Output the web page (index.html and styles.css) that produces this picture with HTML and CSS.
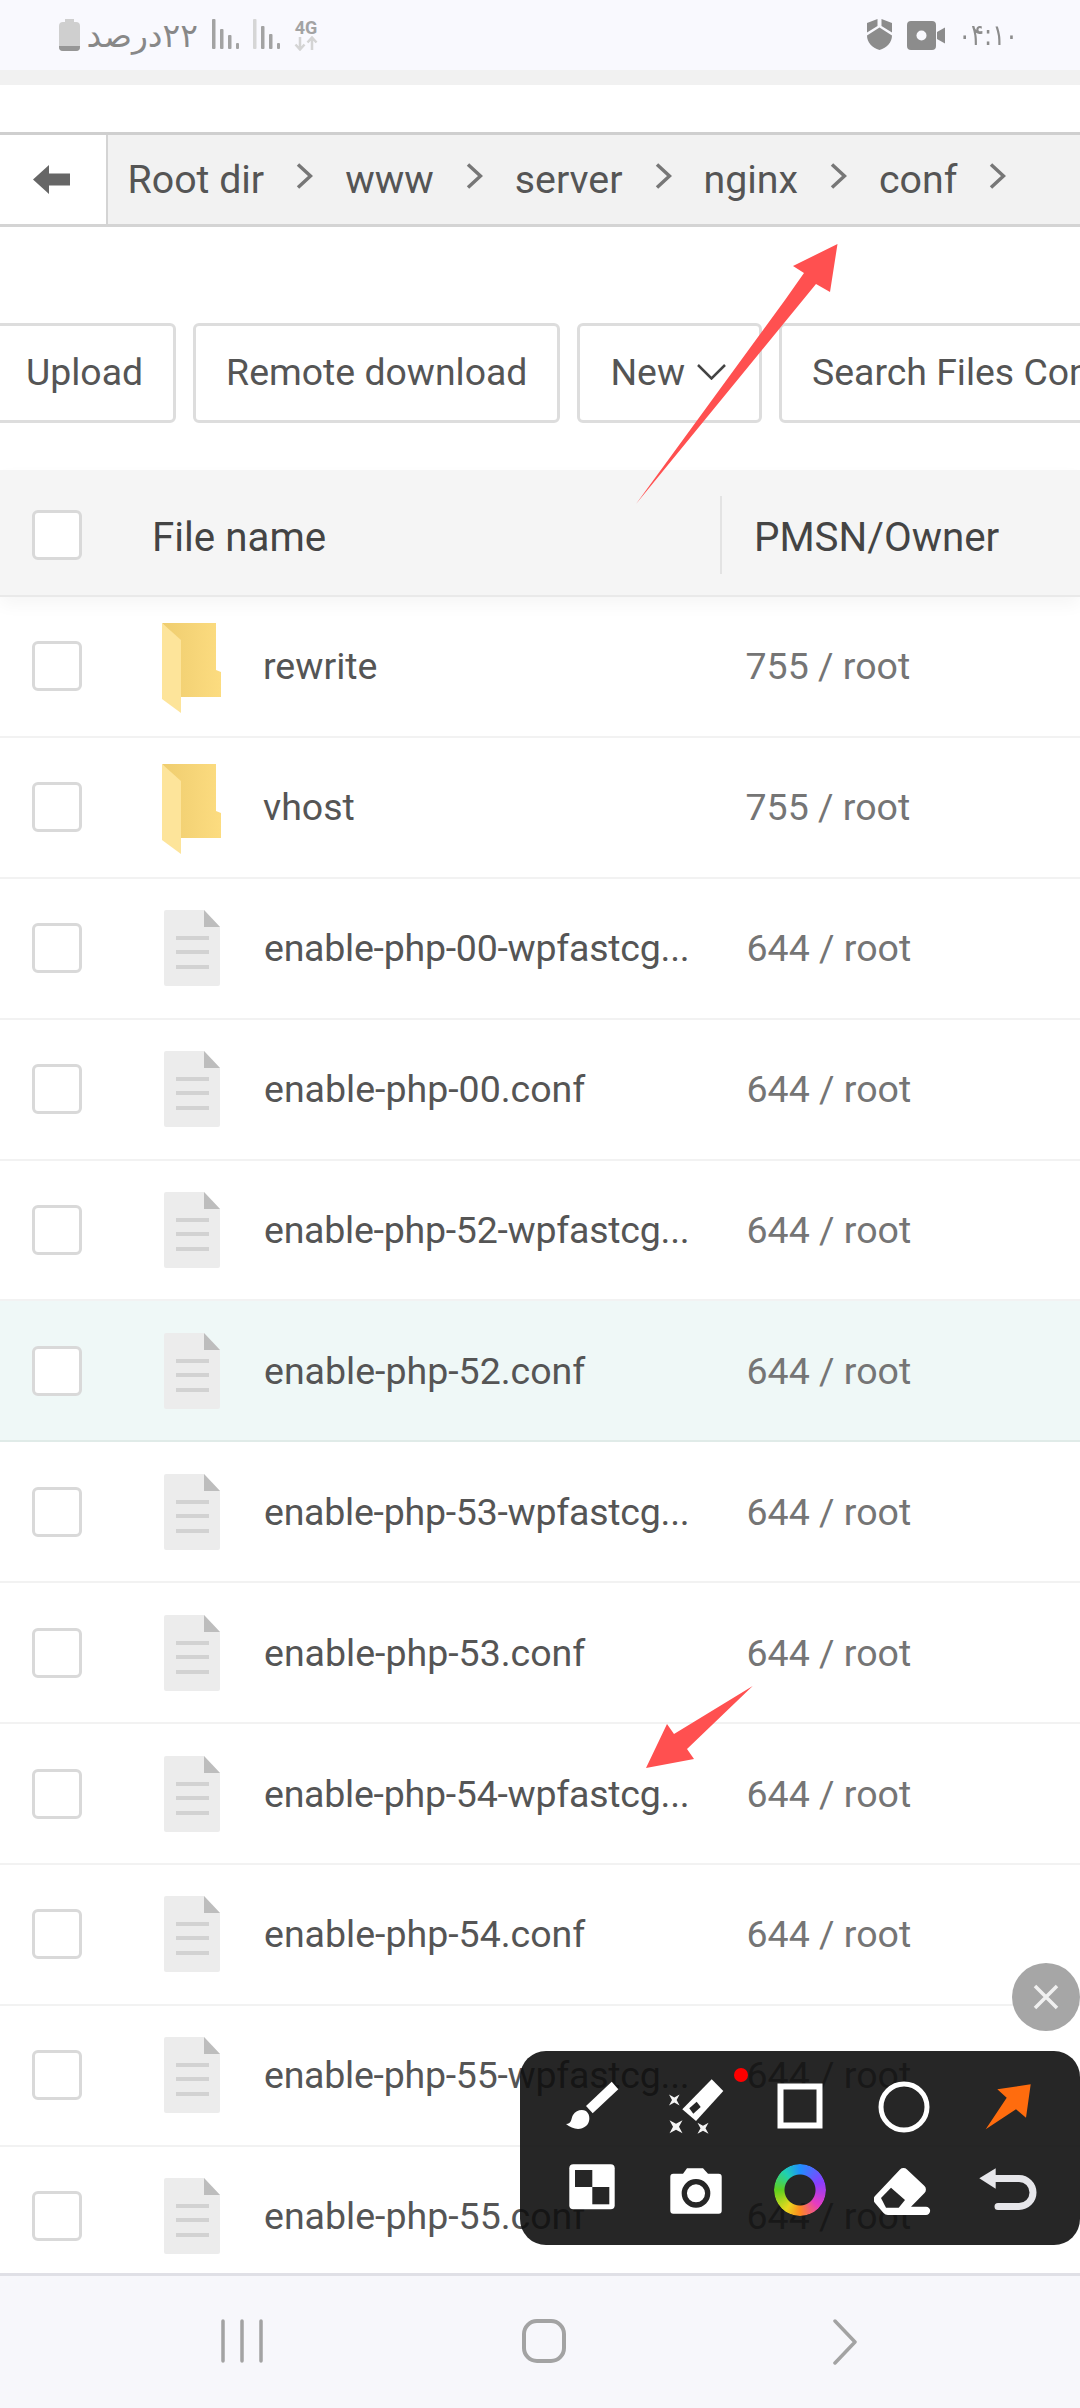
FILE: index.html
```html
<!DOCTYPE html>
<html lang="en">
<head>
    <meta charset="UTF-8">
    <meta name="viewport" content="width=device-width, initial-scale=1.0">
    <title>File manager</title>
    <link rel="stylesheet" href="styles.css">
</head>
<body>
    <div class="phone">
        <div class="status-bar">
            <div class="status-left">
                <svg class="battery" width="21" height="32" viewBox="0 0 21 32"><path d="M6 0h9v3h2a4 4 0 0 1 4 4v21a4 4 0 0 1-4 4H4a4 4 0 0 1-4-4V7a4 4 0 0 1 4-4h2z" fill="#cfcfcf"/><path d="M0 27h21v1a4 4 0 0 1-4 4H4a4 4 0 0 1-4-4z" fill="#969696"/></svg>
                <span class="status-text" dir="rtl">۲۲درصد</span>
                <svg class="signal" width="27" height="30" viewBox="0 0 27 30"><g fill="#a3a3a3"><rect x="0" y="0" width="3.500" height="30" rx="1"/><rect x="8" y="10" width="3.500" height="20" rx="1"/><rect x="16" y="16" width="3.500" height="14" rx="1"/><rect x="24" y="24" width="3" height="6" rx="1"/></g></svg>
                <svg class="signal" width="27" height="30" viewBox="0 0 27 30"><rect x="0" y="0" width="3.500" height="30" rx="1" fill="#d6d6d6"/><g fill="#a3a3a3"><rect x="8" y="7" width="3.500" height="23" rx="1"/><rect x="16" y="15" width="3.500" height="15" rx="1"/><rect x="24" y="24" width="3" height="6" rx="1"/></g></svg>
                <div class="net">
                    <span class="net-label">4G</span>
                    <svg width="24" height="15" viewBox="0 0 24 15"><path d="M6 1v12M1.500 8.500 6 13.500l4.500-5" fill="none" stroke="#d4d4d4" stroke-width="2.500"/><path d="M18 14V2M13.500 6.500 18 1.500l4.500 5" fill="none" stroke="#d4d4d4" stroke-width="2.500"/></svg>
                </div>
            </div>
            <div class="status-right">
                <svg class="st-shield" width="25" height="31" viewBox="0 0 25 31"><path d="M0 4 10.500 0v7L0 13.500zM25 4 14.500 0v7L25 13.500zM0 16.500l12.500-8 12.500 8c0 7-5 12-12.500 14.500C5 28.500 0 23.500 0 16.500z" fill="#8c8c8c"/></svg>
                <svg class="st-cam" width="38" height="29" viewBox="0 0 38 29"><path d="M4 0h21a4 4 0 0 1 4 4v21a4 4 0 0 1-4 4H4a4 4 0 0 1-4-4V4a4 4 0 0 1 4-4zM30 11l8-4.500v16L30 18z" fill="#8c8c8c"/><circle cx="14.500" cy="14.500" r="5" fill="#f9f9fe"/></svg>
                <span class="status-time">۰۴:۱۰</span>
            </div>
        </div>

        <div class="page">
            <div class="path-bar">
                <div class="path-back">
                    <svg width="37" height="29" viewBox="0 0 37 29"><path d="M0 14.500 16 0v8.500h21v12H16V29z" fill="#666"/></svg>
                </div>
                <div class="path-crumbs">
                    <span class="crumb">Root dir</span>
                    <svg class="crumb-sep" width="17" height="26" viewBox="0 0 17 26"><path d="M2 1.500 14.500 13 2 24.500" fill="none" stroke="#777" stroke-width="3.500"/></svg>
                    <span class="crumb">www</span>
                    <svg class="crumb-sep" width="17" height="26" viewBox="0 0 17 26"><path d="M2 1.500 14.500 13 2 24.500" fill="none" stroke="#777" stroke-width="3.500"/></svg>
                    <span class="crumb">server</span>
                    <svg class="crumb-sep" width="17" height="26" viewBox="0 0 17 26"><path d="M2 1.500 14.500 13 2 24.500" fill="none" stroke="#777" stroke-width="3.500"/></svg>
                    <span class="crumb">nginx</span>
                    <svg class="crumb-sep" width="17" height="26" viewBox="0 0 17 26"><path d="M2 1.500 14.500 13 2 24.500" fill="none" stroke="#777" stroke-width="3.500"/></svg>
                    <span class="crumb">conf</span>
                    <svg class="crumb-sep" width="17" height="26" viewBox="0 0 17 26"><path d="M2 1.500 14.500 13 2 24.500" fill="none" stroke="#777" stroke-width="3.500"/></svg>
                </div>
            </div>

            <div class="toolbar">
                <button class="tool-btn">Upload</button>
                <button class="tool-btn">Remote download</button>
                <button class="tool-btn btn-new">New
                    <svg width="29" height="16" viewBox="0 0 29 16"><path d="M1 1l13.500 13.500L28 1" fill="none" stroke="#444" stroke-width="2.500"/></svg>
                </button>
                <button class="tool-btn">Search Files Content</button>
            </div>

            <div class="table-head">
                <div class="cell-check"><span class="check"></span></div>
                <div class="head-name">File name</div>
                <div class="head-owner">PMSN/Owner</div>
            </div>

            <div class="rows">
                <div class="row">
                    <div class="cell-check"><span class="check"></span></div>
                    <svg class="icon-folder" width="60" height="90" viewBox="0 0 60 90"><use href="#folder"/></svg>
                    <div class="name">rewrite</div><div class="owner">755 / root</div>
                </div>
                <div class="row">
                    <div class="cell-check"><span class="check"></span></div>
                    <svg class="icon-folder" width="60" height="90" viewBox="0 0 60 90"><use href="#folder"/></svg>
                    <div class="name">vhost</div><div class="owner">755 / root</div>
                </div>
                <div class="row">
                    <div class="cell-check"><span class="check"></span></div>
                    <svg class="icon-file" width="56" height="76" viewBox="0 0 56 76"><use href="#file"/></svg>
                    <div class="name name-long">enable-php-00-wpfastcg...</div><div class="owner">644 / root</div>
                </div>
                <div class="row">
                    <div class="cell-check"><span class="check"></span></div>
                    <svg class="icon-file" width="56" height="76" viewBox="0 0 56 76"><use href="#file"/></svg>
                    <div class="name">enable-php-00.conf</div><div class="owner">644 / root</div>
                </div>
                <div class="row">
                    <div class="cell-check"><span class="check"></span></div>
                    <svg class="icon-file" width="56" height="76" viewBox="0 0 56 76"><use href="#file"/></svg>
                    <div class="name name-long">enable-php-52-wpfastcg...</div><div class="owner">644 / root</div>
                </div>
                <div class="row row-active">
                    <div class="cell-check"><span class="check"></span></div>
                    <svg class="icon-file" width="56" height="76" viewBox="0 0 56 76"><use href="#file"/></svg>
                    <div class="name">enable-php-52.conf</div><div class="owner">644 / root</div>
                </div>
                <div class="row">
                    <div class="cell-check"><span class="check"></span></div>
                    <svg class="icon-file" width="56" height="76" viewBox="0 0 56 76"><use href="#file"/></svg>
                    <div class="name name-long">enable-php-53-wpfastcg...</div><div class="owner">644 / root</div>
                </div>
                <div class="row">
                    <div class="cell-check"><span class="check"></span></div>
                    <svg class="icon-file" width="56" height="76" viewBox="0 0 56 76"><use href="#file"/></svg>
                    <div class="name">enable-php-53.conf</div><div class="owner">644 / root</div>
                </div>
                <div class="row">
                    <div class="cell-check"><span class="check"></span></div>
                    <svg class="icon-file" width="56" height="76" viewBox="0 0 56 76"><use href="#file"/></svg>
                    <div class="name name-long">enable-php-54-wpfastcg...</div><div class="owner">644 / root</div>
                </div>
                <div class="row">
                    <div class="cell-check"><span class="check"></span></div>
                    <svg class="icon-file" width="56" height="76" viewBox="0 0 56 76"><use href="#file"/></svg>
                    <div class="name">enable-php-54.conf</div><div class="owner">644 / root</div>
                </div>
                <div class="row">
                    <div class="cell-check"><span class="check"></span></div>
                    <svg class="icon-file" width="56" height="76" viewBox="0 0 56 76"><use href="#file"/></svg>
                    <div class="name name-long">enable-php-55-wpfastcg...</div><div class="owner">644 / root</div>
                </div>
                <div class="row">
                    <div class="cell-check"><span class="check"></span></div>
                    <svg class="icon-file" width="56" height="76" viewBox="0 0 56 76"><use href="#file"/></svg>
                    <div class="name">enable-php-55.conf</div><div class="owner">644 / root</div>
                </div>
            </div>
        </div>

        <div class="nav-bar">
            <svg width="44" height="44" viewBox="0 0 44 44"><path d="M3 2v40M22 2v40M41 2v40" fill="none" stroke="#a3a3a3" stroke-width="3.500" stroke-linecap="round"/></svg>
            <svg width="44" height="44" viewBox="0 0 44 44"><rect x="2" y="2" width="40" height="40" rx="13" fill="none" stroke="#a3a3a3" stroke-width="4"/></svg>
            <svg class="nav-back" width="24" height="46" viewBox="0 0 24 46"><path d="M2 2l20 21L2 44" fill="none" stroke="#a3a3a3" stroke-width="3.500" stroke-linecap="round" stroke-linejoin="round"/></svg>
        </div>

        <!-- annotations drawn over the screenshot -->
        <svg class="marks" width="1080" height="2408" viewBox="0 0 1080 2408">
            <path d="M837.500 244 830 292 816 284 636 504 785 300 804 273 793 266z" fill="#ff5050"/>
            <path d="M752.700 1686 674 1734 667 1724 646 1768 694 1759 687 1749z" fill="#ff5050"/>
        </svg>

        <button class="close-btn">
            <svg width="26" height="26" viewBox="0 0 26 26"><path d="M2 2l22 22M24 2 2 24" fill="none" stroke="#f0f0f0" stroke-width="3.500"/></svg>
        </button>

        <div class="draw-panel">
            <span class="red-dot"></span>
            <svg class="tool" width="60" height="60" viewBox="0 0 60 60"><path d="M49.700 4.700 56.300 12.300 30.700 36.300 24 29z" fill="#fff"/><path d="M4 47C10 47 9 41 11 38 14 33 20 32 24 34 29 38 28 46 24 49 18 54 10 52 4 47z" fill="#fff"/></svg>
            <svg class="tool" width="60" height="60" viewBox="0 0 60 60"><path d="M45.700 2.300 57.300 14 30 44 16.300 32.300z" fill="#fff"/><path d="M34.700 30 27.300 36.700 23.300 31.300 30.700 24.700z" fill="#262626"/><path d="M3 17.500 8.300 20.500 13.600 17.500 10.600 23 13.600 28.500 8.300 25.500 3 28.500 6 23zM3.500 43.200 10 46.700 16.500 43.200 13 49.700 16.500 56.200 10 52.700 3.500 56.200 7 49.700zM31.500 45.800 37 48.800 42.500 45.800 39.500 51.300 42.500 56.800 37 53.800 31.500 56.800 34.500 51.300z" fill="#f4f4f4"/></svg>
            <svg class="tool" width="60" height="60" viewBox="0 0 60 60"><rect x="10.500" y="9.500" width="39" height="39" fill="none" stroke="#fff" stroke-width="6"/></svg>
            <svg class="tool" width="60" height="60" viewBox="0 0 60 60"><circle cx="30" cy="30" r="23" fill="none" stroke="#fff" stroke-width="5"/></svg>
            <svg class="tool" width="60" height="60" viewBox="0 0 60 60"><path d="M52.700 7.300 48 40.700 38 32.300 7.700 52.300 28.700 20.700 19.300 12.300z" fill="#ff6c0e"/></svg>
            <svg class="tool" width="60" height="60" viewBox="0 0 60 60"><rect x="7.300" y="4.300" width="45.400" height="45" rx="4" fill="#fff"/><rect x="13" y="10" width="17.300" height="17" fill="#262626"/><rect x="30.300" y="27" width="17" height="17.300" fill="#262626"/></svg>
            <svg class="tool" width="60" height="60" viewBox="0 0 60 60"><path d="M4.300 16.700a3 3 0 0 1 3-3H17L21 8.300H37L42 13.700H52.700a3 3 0 0 1 3 3V50.700a3 3 0 0 1-3 3H7.300a3 3 0 0 1-3-3z" fill="#fff"/><circle cx="30" cy="33.300" r="11.700" fill="none" stroke="#262626" stroke-width="5.300"/></svg>
            <div class="tool color-ring"></div>
            <svg class="tool" width="60" height="60" viewBox="0 0 60 60"><path d="M26 9.500a5 5 0 0 1 7 0L50.500 26a5 5 0 0 1 0 7L37 46.700H52a4 4 0 0 1 0 8.300H14a6 6 0 0 1-4.500-2L1 43a5 5 0 0 1 0-7z" fill="#fff"/><path d="M17 27.700 31 40 24.700 47.700H12L7 38z" fill="#262626"/></svg>
            <svg class="tool" width="60" height="60" viewBox="0 0 60 60"><path d="M1.300 18.300 17.700 8.300V28.700z" fill="#e6e6ea"/><path d="M16 18.500H41a14 14 0 0 1 0 28H20" fill="none" stroke="#e6e6ea" stroke-width="7" stroke-linecap="round"/></svg>
        </div>

        <svg class="defs" width="0" height="0">
            <defs>
                <linearGradient id="folderBack" x1="0" x2="1" y1="0" y2="0"><stop offset="0" stop-color="#efcd6f"/><stop offset="1" stop-color="#fcdc80"/></linearGradient>
                <g id="folder">
                    <path d="M0 0h54v47l5 2v25H19V24z" fill="url(#folderBack)"/>
                    <path d="M0 0 19 17v73L0 76z" fill="#fde49a"/>
                </g>
                <g id="file">
                    <path d="M0 2a2 2 0 0 1 2-2h38l16 17v57a2 2 0 0 1-2 2H2a2 2 0 0 1-2-2z" fill="#ececec"/>
                    <path d="M40 0 56 17H40z" fill="#bdbdbd"/>
                    <path d="M12 26h33v4H12zM12 40h33v4H12zM12 55h33v4H12z" fill="#d2d2d2"/>
                </g>
            </defs>
        </svg>
    </div>
</body>
</html>
```

FILE: styles.css
```css
* {
    box-sizing: border-box;
}

body {
    margin: 0;
    font-family: 'Roboto', sans-serif;
    background: #fff;
}

.phone {
    position: relative;
    width: 1080px;
    height: 2408px;
    display: flex;
    flex-direction: column;
    overflow: hidden;
}

.status-bar {
    height: 85px;
    flex: none;
    display: flex;
    justify-content: space-between;
    padding: 19px 62px 0 59px;
    background: #f9f9fe;
    border-bottom: 15px solid #f1f1f1;
}

.status-left,
.status-right {
    display: flex;
    align-items: flex-start;
}

.status-text {
    font-family: 'DejaVu Sans', sans-serif;
    font-size: 33px;
    line-height: 34px;
    color: #888;
    width: 110px;
    margin: 0 14px 0 8px;
    text-align: center;
    white-space: nowrap;
}

.signal {
    margin-right: 14px;
}

.net {
    display: flex;
    flex-direction: column;
    align-items: center;
    width: 24px;
}

.net-label {
    font-size: 18px;
    line-height: 17px;
    font-weight: 700;
    color: #a3a3a3;
}

.st-shield {
    margin-right: 15px;
}

.st-cam {
    margin: 2px 17px 0 0;
}

.status-time {
    width: 56px;
    display: flex;
    justify-content: flex-end;
    font-family: 'DejaVu Sans', sans-serif;
    font-size: 29px;
    line-height: 32px;
    white-space: nowrap;
    color: #8c8c8c;
    transform: scaleX(0.83);
    transform-origin: right;
}

.page {
    flex: 1;
    min-height: 0;
    overflow: hidden;
}

.path-bar {
    display: flex;
    height: 95px;
    margin-top: 47px;
    border-top: 3px solid #cfcfcf;
    border-bottom: 3px solid #d4d4d4;
}

.path-back {
    width: 108px;
    flex: none;
    display: flex;
    align-items: center;
    padding-left: 33px;
    border-right: 2px solid #d4d4d4;
}

.path-crumbs {
    flex: 1;
    display: flex;
    align-items: center;
    background: #f2f2f2;
    padding-left: 19.5px;
}

.crumb {
    font-size: 39.3px;
    color: #555;
}

.crumb-sep {
    flex: none;
    margin: -8px 32px 0 32px;
}

.toolbar {
    display: flex;
    gap: 17px;
    height: 100px;
    margin: 96px 0 47px -7px;
}

.tool-btn {
    flex: none;
    height: 100px;
    padding: 0 30px 2px;
    background: #fff;
    border: 3px solid #ddd;
    border-radius: 6px;
    font-family: 'Roboto', sans-serif;
    font-size: 37.4px;
    color: #555;
    white-space: nowrap;
}

.btn-new {
    display: flex;
    align-items: center;
    gap: 12px;
    padding-right: 33px;
}

.table-head {
    display: flex;
    align-items: center;
    height: 127px;
    padding-top: 4px;
    background: #f5f5f5;
    border-bottom: 2px solid #e9e9e9;
    box-shadow: 0 8px 16px rgba(0, 0, 0, 0.04);
    position: relative;
    font-size: 40.3px;
    color: #444;
}

.cell-check {
    width: 152px;
    flex: none;
    padding-left: 32px;
    display: flex;
}

.check {
    width: 50px;
    height: 50px;
    background: #fff;
    border: 3px solid #d9d9d9;
    border-radius: 6px;
}

.head-name {
    width: 568px;
    flex: none;
    padding-top: 5px;
}

.head-owner {
    height: 78px;
    padding-left: 32px;
    line-height: 83px;
    border-left: 2px solid #e3e3e3;
}

.row {
    display: flex;
    align-items: center;
    height: 140.9px;
    background: #fff;
    border-bottom: 2px solid #f2f2f2;
    font-size: 37.5px;
    color: #555;
}

.row-active {
    background: #eff8f7;
    border-bottom-color: #e0ebe8;
}

.icon-folder,
.icon-file {
    flex: none;
}

.icon-file {
    margin-left: 12px;
    margin-right: 44px;
}

.icon-folder {
    margin: 4px 41px 0 10px;
}

.name {
    width: 482.5px;
    flex: none;
    white-space: nowrap;
}

.name-long {
    letter-spacing: -0.25px;
}

.owner {
    color: #757575;
    white-space: nowrap;
}

.nav-bar {
    height: 135px;
    flex: none;
    display: flex;
    align-items: flex-start;
    padding: 43px 0 0 220px;
    gap: 258px;
    background: #f7f7fb;
    border-top: 3px solid #e0e0e6;
}

.nav-back {
    margin-left: 9px;
}

.marks {
    position: absolute;
    top: 0;
    left: 0;
    pointer-events: none;
}

.close-btn {
    position: absolute;
    top: 1963px;
    left: 1012px;
    width: 68px;
    height: 68px;
    padding: 0;
    border: none;
    border-radius: 50%;
    background: #a6a6a6;
    display: flex;
    align-items: center;
    justify-content: center;
}

.draw-panel {
    position: absolute;
    top: 2051px;
    left: 520px;
    width: 560px;
    height: 194px;
    padding: 14px 20px 0;
    display: grid;
    grid-template-columns: repeat(5, 104px);
    grid-auto-rows: 83px;
    justify-items: center;
    align-items: center;
    background: rgba(14, 14, 14, 0.9);
    border-radius: 26px;
}

.red-dot {
    position: absolute;
    top: 17px;
    left: 214px;
    width: 14px;
    height: 14px;
    border-radius: 50%;
    background: #fe0000;
}

.color-ring {
    width: 52px;
    height: 52px;
    border-radius: 50%;
    background: conic-gradient(#1f8fff, #8a3dff 70deg, #e63cc0 130deg, #ff8a1f 180deg, #e9d81f 215deg, #5fd01f 270deg, #1fd0b0 320deg, #1f8fff);
    -webkit-mask: radial-gradient(circle, transparent 15px, #000 16px);
    mask: radial-gradient(circle, transparent 15px, #000 16px);
}

.defs {
    position: absolute;
}
```
